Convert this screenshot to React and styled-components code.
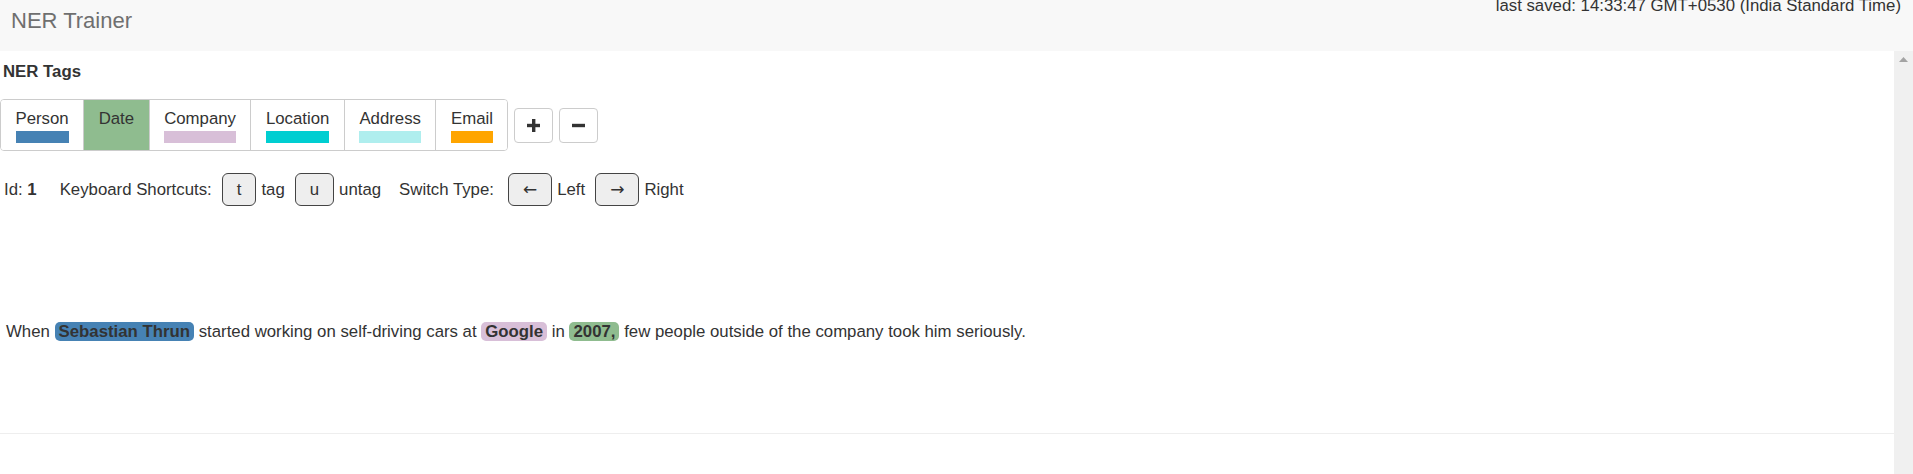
import React from "react";
import styled, { createGlobalStyle } from "styled-components";

const GlobalStyle = createGlobalStyle`
  html, body {
    margin: 0;
    padding: 0;
    background: #fff;
    overflow: hidden;
  }
  body {
    font-family: "Liberation Sans", Arial, sans-serif;
    color: #333;
  }
`;

const TAGS = [
  { name: "Person", color: "#4682b4" },
  { name: "Date", color: "#8fbc8f" },
  { name: "Company", color: "#d8bfd8" },
  { name: "Location", color: "#00ced1" },
  { name: "Address", color: "#afeeee" },
  { name: "Email", color: "#ffa500" },
];

const Page = styled.div`
  width: 1913px;
  height: 474px;
  display: flex;
  flex-direction: column;
`;

const Navbar = styled.header`
  height: 51px;
  flex-shrink: 0;
  background: #f8f8f8;
  display: flex;
  justify-content: space-between;
  align-items: flex-start;
`;

const Brand = styled.div`
  padding: 10px 0 0 11px;
  font-size: 22px;
  line-height: 21px;
  color: #6f6f6f;
`;

const Saved = styled.div`
  margin-top: -3px;
  padding-right: 12px;
  font-size: 16.8px;
  line-height: 17px;
  color: #333;
`;

const Body = styled.div`
  flex: 1;
  display: flex;
  min-height: 0;
`;

const Main = styled.main`
  flex: 1;
  display: flex;
  flex-direction: column;
  font-size: 16.8px;
`;

const Title = styled.h4`
  margin: 11px 0 0 3px;
  font-size: 16.8px;
  line-height: 20px;
  font-weight: bold;
`;

const TagRow = styled.div`
  display: flex;
  align-items: center;
  gap: 6px;
  margin-top: 17px;
`;

const TagGroup = styled.div`
  display: flex;
  border: 1px solid #ccc;
  border-radius: 4px;
  overflow: hidden;
`;

const TagCell = styled.div`
  display: flex;
  flex-direction: column;
  align-items: stretch;
  padding: 11px 14.5px 7px;
  background: ${(p) => (p.$selected ? p.$color : "#fff")};
  & + & {
    border-left: 1px solid #ccc;
  }
`;

const TagLabel = styled.span`
  line-height: 16px;
  white-space: nowrap;
`;

const TagBar = styled.span`
  display: block;
  height: 12px;
  margin-top: 4px;
  background: ${(p) => p.$color};
`;

const IconButton = styled.button`
  width: 39px;
  height: 35px;
  padding: 0;
  display: flex;
  align-items: center;
  justify-content: center;
  background: #fff;
  border: 1px solid #ccc;
  border-radius: 4px;
  color: #333;
`;

const ShortcutRow = styled.div`
  display: flex;
  align-items: center;
  margin: 22px 0 0 4px;
  white-space: nowrap;
`;

const Group = styled.span`
  display: flex;
  align-items: center;
  margin-right: ${(p) => p.$gap ?? 18}px;
`;

const Key = styled.kbd`
  font-family: ${(p) =>
    p.$arrow ? '"DejaVu Sans", sans-serif' : '"Liberation Sans", Arial, sans-serif'};
  font-size: ${(p) => (p.$arrow ? "17px" : "16.8px")};
  line-height: 17px;
  padding: 7px 14px;
  margin: 0 5px 0 10px;
  background: #eee;
  border: 1px solid #444;
  border-radius: 6px;
  color: #333;
`;

const Sentence = styled.p`
  margin: 114px 0 0 6px;
  line-height: 24px;
`;

const Mark = styled.span`
  background: ${(p) => p.$color};
  font-weight: bold;
  padding: 0 4px;
  border-radius: 5px;
`;

const Divider = styled.hr`
  margin: 89px 0 0;
  border: 0;
  border-top: 1px solid #eee;
`;

const ScrollTrack = styled.div`
  width: 19px;
  flex-shrink: 0;
  background: #f0f0f0;
  display: flex;
  justify-content: center;
  padding-top: 6px;
`;

function PlusIcon() {
  return (
    <svg width="13" height="13" viewBox="0 0 13 13">
      <rect x="5" y="0" width="3.4" height="13" fill="#333" />
      <rect x="0" y="4.8" width="13" height="3.4" fill="#333" />
    </svg>
  );
}

function MinusIcon() {
  return (
    <svg width="13" height="13" viewBox="0 0 13 13">
      <rect x="0" y="4.8" width="13" height="3.4" fill="#333" />
    </svg>
  );
}

function App() {
  return (
    <>
      <GlobalStyle />
      <Page>
        <Navbar>
          <Brand>NER Trainer</Brand>
          <Saved>last saved: 14:33:47 GMT+0530 (India Standard Time)</Saved>
        </Navbar>
        <Body>
          <Main>
            <Title>NER Tags</Title>
            <TagRow>
              <TagGroup>
                {TAGS.map((t) => (
                  <TagCell key={t.name} $color={t.color} $selected={t.name === "Date"}>
                    <TagLabel>{t.name}</TagLabel>
                    <TagBar $color={t.color} />
                  </TagCell>
                ))}
              </TagGroup>
              <IconButton>
                <PlusIcon />
              </IconButton>
              <IconButton>
                <MinusIcon />
              </IconButton>
            </TagRow>

            <ShortcutRow>
              <Group $gap={23}>
                Id:&nbsp;<b>1</b>
              </Group>
              <Group $gap={0}>Keyboard Shortcuts:</Group>
              <Key>t</Key>
              <Group $gap={0}>tag</Group>
              <Key>u</Key>
              <Group>untag</Group>
              <Group $gap={4}>Switch Type:</Group>
              <Key $arrow>←</Key>
              <Group $gap={0}>Left</Group>
              <Key $arrow>→</Key>
              <Group $gap={0}>Right</Group>
            </ShortcutRow>

            <Sentence>
              When <Mark $color="#4682b4">Sebastian Thrun</Mark> started working on
              self-driving cars at <Mark $color="#d8bfd8">Google</Mark> in{" "}
              <Mark $color="#8fbc8f">2007,</Mark> few people outside of the company
              took him seriously.
            </Sentence>

            <Divider />
          </Main>
          <ScrollTrack>
            <svg width="9" height="5" viewBox="0 0 9 5">
              <polygon points="0,5 4.5,0 9,5" fill="#a3a3a3" />
            </svg>
          </ScrollTrack>
        </Body>
      </Page>
    </>
  );
}

export default App;
